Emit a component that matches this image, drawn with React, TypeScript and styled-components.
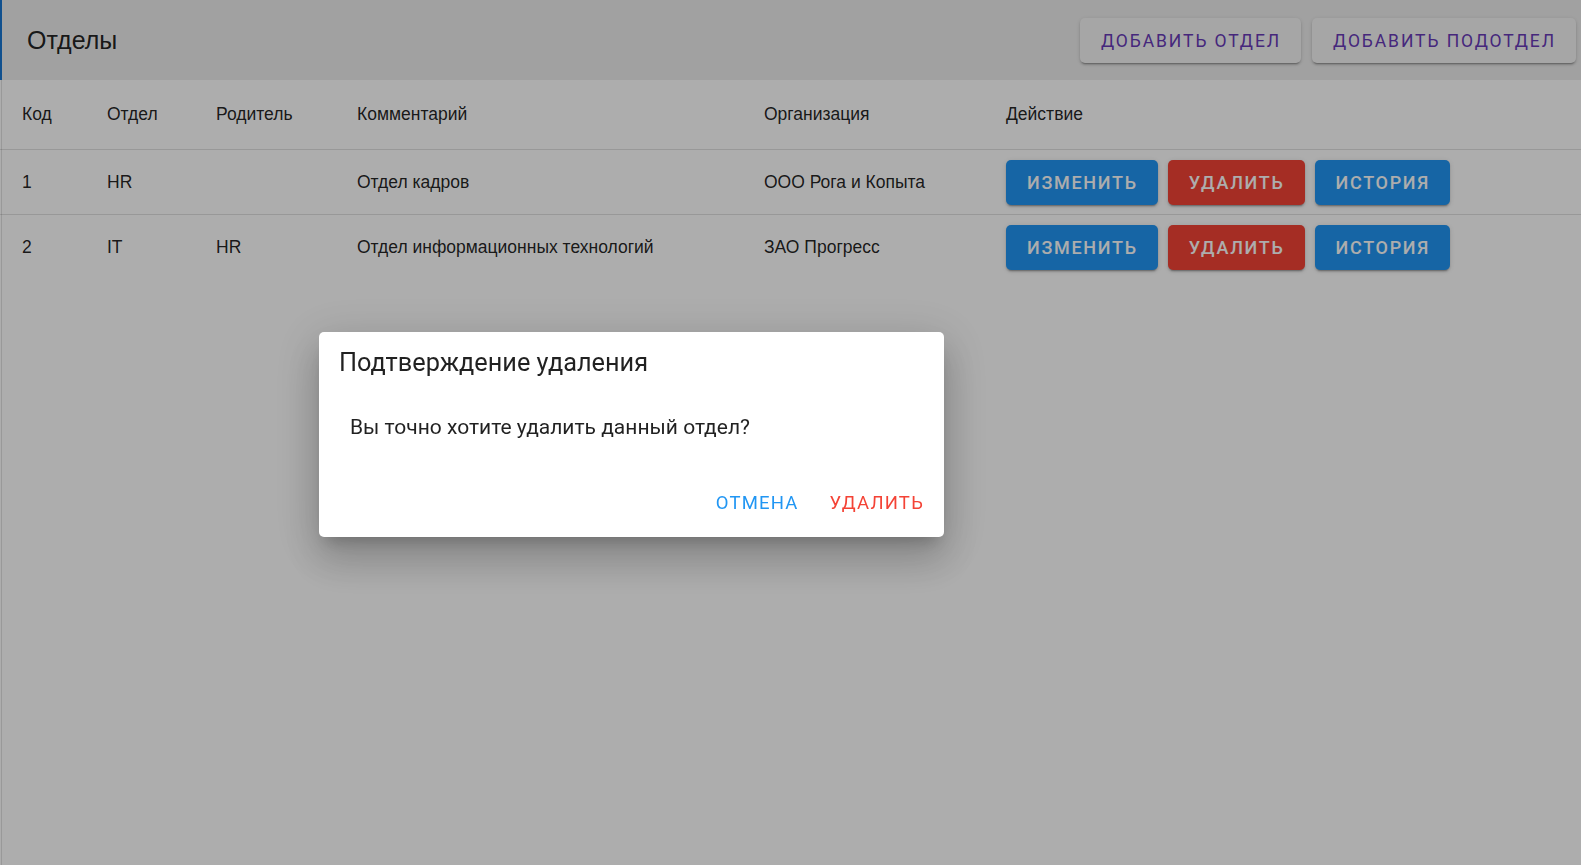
import React from "react";
import styled, { createGlobalStyle } from "styled-components";

const GlobalStyle = createGlobalStyle`
  html, body { margin: 0; padding: 0; background: #ffffff; }
  body { font-family: "Liberation Sans", Arial, sans-serif; color: rgba(0,0,0,0.87); }
  * { box-sizing: border-box; }
`;

const Page = styled.div`
  min-height: 100vh;
  display: flex;
  flex-direction: column;
  background: #ffffff;
`;

const Header = styled.header`
  height: 80px;
  display: flex;
  align-items: center;
  justify-content: space-between;
  background: #eeeeee;
  border-left: 2px solid #1976d2;
  padding: 1px 5px 0 25px;
`;

const Title = styled.h1`
  margin: 0;
  font-family: "Liberation Sans", Arial, sans-serif;
  font-size: 25px;
  font-weight: 400;
  color: rgba(0, 0, 0, 0.87);
`;

const HeaderActions = styled.div`
  display: flex;
  gap: 11px;
`;

const RaisedButton = styled.button`
  height: 45px;
  padding: 0 20px 0 21px;
  border: none;
  border-radius: 5px;
  background: #f5f5f5;
  color: #673ab7;
  font-family: Roboto, sans-serif;
  font-size: 17.5px;
  font-weight: 400;
  letter-spacing: 1.9px;
  text-transform: uppercase;
  box-shadow: 0 3px 1px -2px rgba(0,0,0,0.2), 0 2px 2px 0 rgba(0,0,0,0.14), 0 1px 5px 0 rgba(0,0,0,0.12);
  cursor: pointer;
`;

const Main = styled.main`
  flex: 1;
  box-shadow: inset 1px 0 0 #ffffff, inset 2px 0 0 #e2e2e2;
`;

const cols = "85px 109px 141px 407px 242px 1fr";

const HeadRow = styled.div`
  display: grid;
  grid-template-columns: ${cols};
  align-items: center;
  height: 70px;
  padding-left: 22px;
  border-bottom: 1px solid rgba(0, 0, 0, 0.12);
`;

const BodyRow = styled.div<{ $last?: boolean }>`
  display: grid;
  grid-template-columns: ${cols};
  align-items: center;
  height: ${(p) => (p.$last ? "64px" : "65px")};
  padding-left: 22px;
  border-bottom: ${(p) => (p.$last ? "none" : "1px solid rgba(0, 0, 0, 0.12)")};
`;

const Cell = styled.div`
  font-family: "Liberation Sans", Arial, sans-serif;
  font-size: 17.5px;
  color: rgba(0, 0, 0, 0.87);
  white-space: nowrap;
`;

const ActionCell = styled.div`
  display: flex;
  gap: 10px;
`;

const FlatButton = styled.button<{ $tone: "primary" | "warn" }>`
  height: 45px;
  min-width: 110px;
  padding: 0 20px 0 21px;
  border: none;
  border-radius: 5px;
  background: ${(p) => (p.$tone === "warn" ? "#f44336" : "#2196f3")};
  color: #ffffff;
  font-family: Roboto, sans-serif;
  font-size: 18px;
  font-weight: 500;
  letter-spacing: 1.7px;
  text-transform: uppercase;
  box-shadow: 0 3px 1px -2px rgba(0,0,0,0.2), 0 2px 2px 0 rgba(0,0,0,0.14), 0 1px 5px 0 rgba(0,0,0,0.12);
  cursor: pointer;
`;

const Overlay = styled.div`
  position: fixed;
  inset: 0;
  background: rgba(0, 0, 0, 0.32);
  display: flex;
  align-items: center;
  justify-content: flex-start;
  padding: 3px 0 0 319px;
`;

const Dialog = styled.div`
  width: 625px;
  height: 205px;
  background: #ffffff;
  border-radius: 5px;
  display: flex;
  flex-direction: column;
  box-shadow: 0 11px 15px -7px rgba(0,0,0,0.2), 0 24px 38px 3px rgba(0,0,0,0.14), 0 9px 46px 8px rgba(0,0,0,0.12);
`;

const DialogTitle = styled.h2`
  margin: 0;
  padding: 15px 20px 0;
  font-family: Roboto, sans-serif;
  font-size: 25.3px;
  font-weight: 400;
  line-height: 32px;
  color: rgba(0, 0, 0, 0.87);
`;

const DialogContent = styled.p`
  margin: 0;
  padding: 35px 31px 0;
  font-family: Roboto, sans-serif;
  font-size: 21px;
  line-height: 26px;
  color: rgba(0, 0, 0, 0.87);
`;

const DialogActions = styled.div`
  margin-top: auto;
  display: flex;
  justify-content: flex-end;
  gap: 11px;
  padding: 0 10px 11px;
`;

const TextButton = styled.button<{ $tone: "primary" | "warn" }>`
  height: 45px;
  padding: 0 10px;
  border: none;
  background: transparent;
  color: ${(p) => (p.$tone === "warn" ? "#f44336" : "#2196f3")};
  font-family: Roboto, sans-serif;
  font-size: 18.5px;
  font-weight: 400;
  letter-spacing: 1.2px;
  text-transform: uppercase;
  cursor: pointer;
`;

const rows = [
  { id: "1", name: "HR", parent: "", comment: "Отдел кадров", org: "ООО Рога и Копыта" },
  { id: "2", name: "IT", parent: "HR", comment: "Отдел информационных технологий", org: "ЗАО Прогресс" },
];

export default function App() {
  return (
    <>
      <GlobalStyle />
      <Page>
        <Header>
          <Title>Отделы</Title>
          <HeaderActions>
            <RaisedButton>Добавить отдел</RaisedButton>
            <RaisedButton>Добавить подотдел</RaisedButton>
          </HeaderActions>
        </Header>
        <Main>
          <HeadRow>
            <Cell>Код</Cell>
            <Cell>Отдел</Cell>
            <Cell>Родитель</Cell>
            <Cell>Комментарий</Cell>
            <Cell>Организация</Cell>
            <Cell>Действие</Cell>
          </HeadRow>
          {rows.map((r, i) => (
            <BodyRow key={r.id} $last={i === rows.length - 1}>
              <Cell>{r.id}</Cell>
              <Cell>{r.name}</Cell>
              <Cell>{r.parent}</Cell>
              <Cell>{r.comment}</Cell>
              <Cell>{r.org}</Cell>
              <ActionCell>
                <FlatButton $tone="primary">Изменить</FlatButton>
                <FlatButton $tone="warn">Удалить</FlatButton>
                <FlatButton $tone="primary">История</FlatButton>
              </ActionCell>
            </BodyRow>
          ))}
        </Main>
      </Page>
      <Overlay>
        <Dialog>
          <DialogTitle>Подтверждение удаления</DialogTitle>
          <DialogContent>Вы точно хотите удалить данный отдел?</DialogContent>
          <DialogActions>
            <TextButton $tone="primary">Отмена</TextButton>
            <TextButton $tone="warn">Удалить</TextButton>
          </DialogActions>
        </Dialog>
      </Overlay>
    </>
  );
}
